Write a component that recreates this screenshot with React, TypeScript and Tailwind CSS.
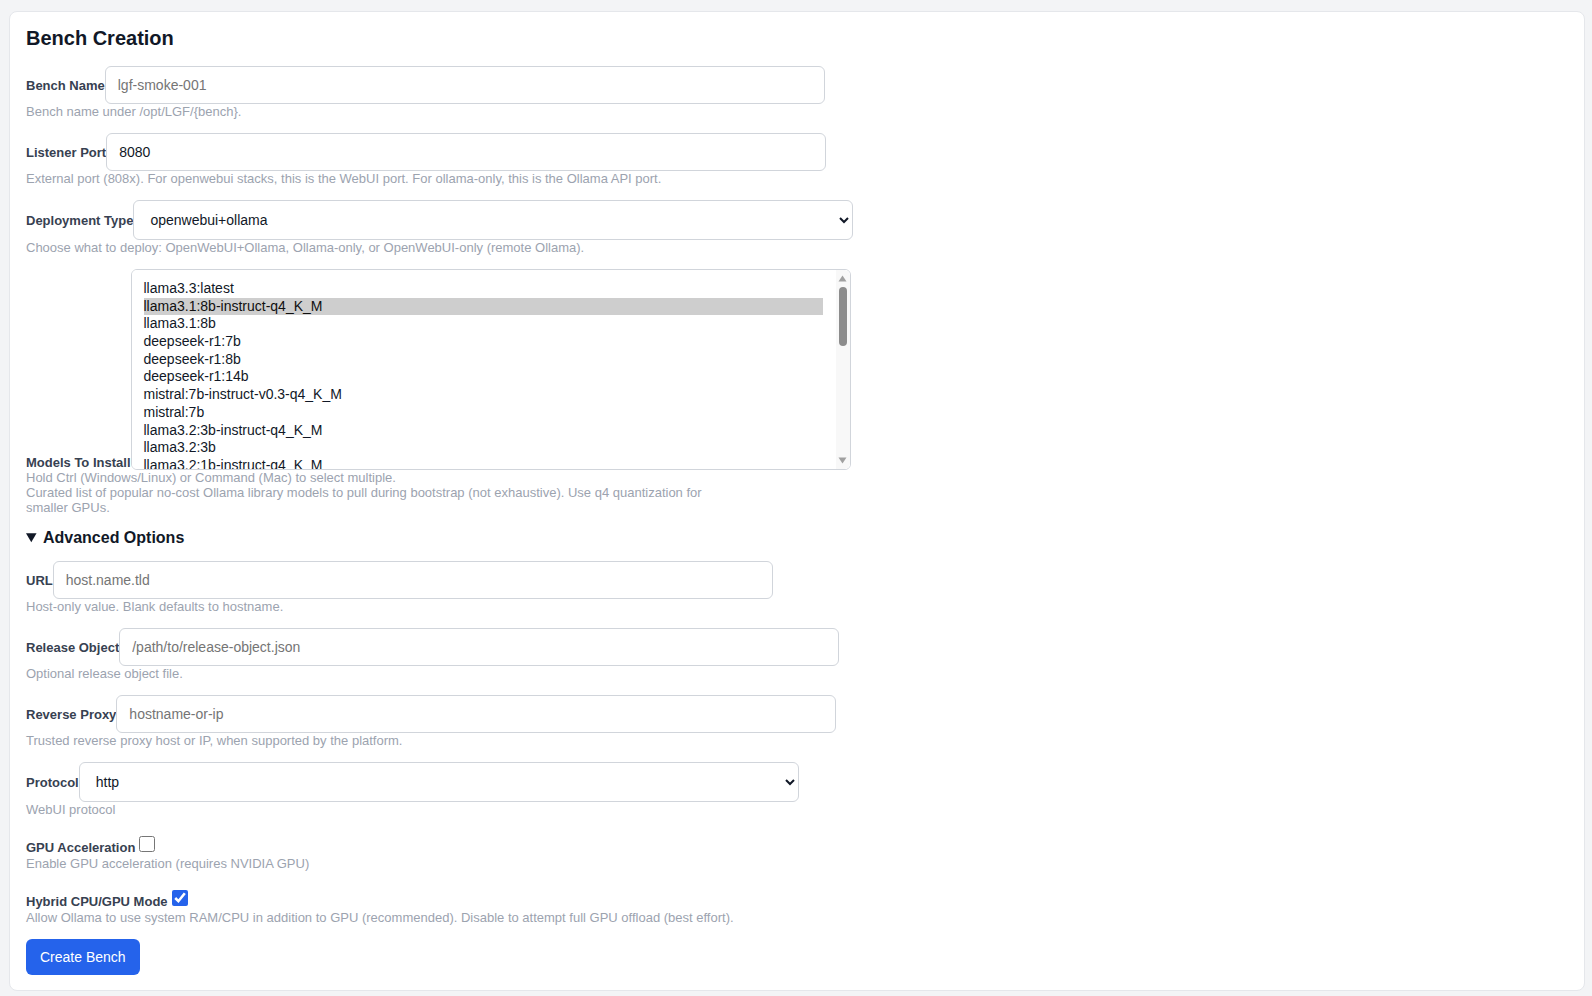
import type { ReactNode } from "react";

const MODELS = [
  "llama3.3:latest",
  "llama3.1:8b-instruct-q4_K_M",
  "llama3.1:8b",
  "deepseek-r1:7b",
  "deepseek-r1:8b",
  "deepseek-r1:14b",
  "mistral:7b-instruct-v0.3-q4_K_M",
  "mistral:7b",
  "llama3.2:3b-instruct-q4_K_M",
  "llama3.2:3b",
  "llama3.2:1b-instruct-q4_K_M",
  "llama3.2:1b",
  "qwen2.5:7b-instruct-q4_K_M",
  "qwen2.5:7b",
  "qwen2.5:14b",
  "qwen2.5-coder:7b",
  "gemma2:9b-instruct-q4_K_M",
  "gemma2:9b",
  "gemma2:2b",
  "phi3:mini",
  "phi3:medium",
  "phi4:14b",
  "codellama:7b",
  "codellama:13b",
  "mixtral:8x7b",
  "nomic-embed-text:latest",
  "llava:7b",
  "starcoder2:3b",
  "tinyllama:1.1b",
  "orca-mini:3b",
  "neural-chat:7b",
  "openchat:7b",
  "zephyr:7b",
  "vicuna:7b",
];

const inputCls =
  "w-[720px] border border-[#d1d5db] rounded-md px-3 py-[10px] text-[14px] text-[#111827] bg-white placeholder:text-[#757575]";

function Field({
  label,
  help,
  children,
  check,
  bottom,
}: {
  label: string;
  help: ReactNode;
  children: ReactNode;
  check?: boolean;
  bottom?: boolean;
}) {
  return (
    <div className={check ? "mb-[14px] pt-[2px]" : "mb-[14px]"}>
      <div className={bottom ? "flex items-end" : ""}>
        <label className="shrink-0 text-[13px] font-bold text-[#374151]">{label}</label>
        {children}
      </div>
      <small className="block max-w-[720px] text-[13px] text-[#9ca3af]">{help}</small>
    </div>
  );
}

// native scrollbars don't show in the screenshot, so draw a classic one over the listbox
function FakeScrollbar() {
  return (
    <div className="absolute top-px bottom-px right-px w-[14px] rounded-r-md bg-[#f8f8f8] flex flex-col items-center pointer-events-none">
      <svg width="9" height="7" viewBox="0 0 9 7" className="mt-[5px]">
        <path d="M4.5 0.5 L8.5 6.5 L0.5 6.5 Z" fill="#a0a0a0" />
      </svg>
      <div className="mt-[5px] w-[8px] h-[59px] rounded-full bg-[#8c8c8c]" />
      <div className="flex-1" />
      <svg width="9" height="7" viewBox="0 0 9 7" className="mb-[5px]">
        <path d="M0.5 0.5 L8.5 0.5 L4.5 6.5 Z" fill="#a0a0a0" />
      </svg>
    </div>
  );
}

export default function App() {
  return (
    <div className="min-h-screen bg-[#f3f4f6] pt-[11px] pl-[9px] pr-[7px] pb-[5px] font-['Liberation_Sans',Arial,sans-serif] leading-[normal]">
      <div className="bg-white border border-[#e5e7eb] rounded-lg px-4 pt-[15px] pb-[15px]">
        <h2 className="text-[20px] font-bold text-[#111827] mb-4">Bench Creation</h2>

        <Field label="Bench Name" help="Bench name under /opt/LGF/{bench}.">
          <input className={inputCls} placeholder="lgf-smoke-001" />
        </Field>

        <Field
          label="Listener Port"
          help="External port (808x). For openwebui stacks, this is the WebUI port. For ollama-only, this is the Ollama API port."
        >
          <input className={inputCls} defaultValue="8080" />
        </Field>

        <Field
          label="Deployment Type"
          help="Choose what to deploy: OpenWebUI+Ollama, Ollama-only, or OpenWebUI-only (remote Ollama)."
        >
          <select className={inputCls} defaultValue="openwebui+ollama">
            <option value="openwebui+ollama">openwebui+ollama</option>
            <option value="ollama">ollama-only</option>
            <option value="openwebui">openwebui-only</option>
          </select>
        </Field>

        <Field
          bottom
          label="Models To Install"
          help={
            <>
              Hold Ctrl (Windows/Linux) or Command (Mac) to select multiple.
              <br />
              Curated list of popular no-cost Ollama library models to pull during bootstrap (not exhaustive). Use q4
              quantization for smaller GPUs.
            </>
          }
        >
          <div className="relative">
            <select
              multiple
              className="block w-[720px] h-[201px] border border-[#d1d5db] rounded-md pl-3 pr-[27px] py-[10px] text-[14px] text-[#111827] bg-white [scrollbar-width:none]"
              defaultValue={["llama3.1:8b-instruct-q4_K_M"]}
            >
              {MODELS.map((m) => (
                <option key={m} value={m} className="pb-[1.7px]">
                  {m}
                </option>
              ))}
            </select>
            <FakeScrollbar />
          </div>
        </Field>

        <details open>
          <summary className="mb-[14px] text-[16px] font-bold text-[#111827] cursor-pointer">Advanced Options</summary>

          <Field label="URL" help="Host-only value. Blank defaults to hostname.">
            <input className={inputCls} placeholder="host.name.tld" />
          </Field>

          <Field label="Release Object" help="Optional release object file.">
            <input className={inputCls} placeholder="/path/to/release-object.json" />
          </Field>

          <Field label="Reverse Proxy" help="Trusted reverse proxy host or IP, when supported by the platform.">
            <input className={inputCls} placeholder="hostname-or-ip" />
          </Field>

          <Field label="Protocol" help="WebUI protocol">
            <select className={inputCls} defaultValue="http">
              <option value="http">http</option>
              <option value="https">https</option>
            </select>
          </Field>

          <Field check label="GPU Acceleration" help="Enable GPU acceleration (requires NVIDIA GPU)">
            <input type="checkbox" className="w-4 h-4 m-[3px_3px_3px_4px] accent-[#2563eb]" />
          </Field>

          <Field
            check
            label="Hybrid CPU/GPU Mode"
            help="Allow Ollama to use system RAM/CPU in addition to GPU (recommended). Disable to attempt full GPU offload (best effort)."
          >
            <input type="checkbox" defaultChecked className="w-4 h-4 m-[3px_3px_3px_4px] accent-[#2563eb]" />
          </Field>
        </details>

        <button className="px-[14px] py-[10px] rounded-md bg-[#2563eb] text-white text-[14px]">Create Bench</button>
      </div>
    </div>
  );
}
